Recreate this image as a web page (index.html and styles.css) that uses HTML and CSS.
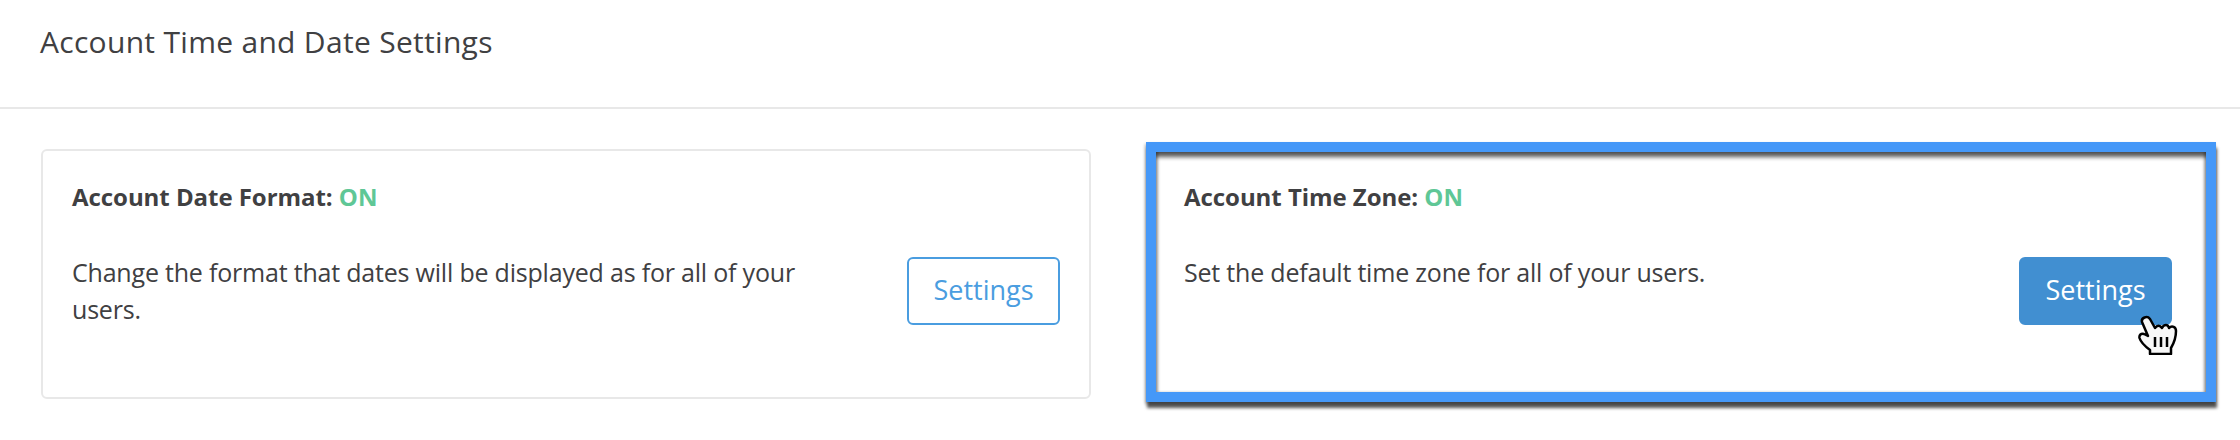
FILE: index.html
```html
<!DOCTYPE html>
<html lang="en">
<head>
  <meta charset="UTF-8">
  <title>Account Time and Date Settings</title>
  <link rel="stylesheet" href="styles.css">
</head>
<body>

  <h2 class="page-title">Account Time and Date Settings</h2>

  <div class="cards">
    <div class="card">
      <h3 class="card-title">Account Date Format: <span class="on">ON</span></h3>
      <div class="card-body">
        <p>Change the format that dates will be displayed as for all of your users.</p>
        <button class="btn">Settings</button>
      </div>
    </div>

    <div class="card card-marked">
      <h3 class="card-title">Account Time Zone: <span class="on">ON</span></h3>
      <div class="card-body">
        <p>Set the default time zone for all of your users.</p>
        <button class="btn btn-hover">Settings
          <svg class="cursor" width="40" height="40" viewBox="0 0 40 40">
            <path d="M4 7C3 3 9 0 12 4L17 13C19 10 22 10 24 13C26 9 30 9 31 13C34 10 38 12 38 16C38 24 36 28 33 33L33 39L12 39L12 35C8 32 3 28 1.500 23C1 20 3 18 6 19L10 21Z" fill="#f7f7f7" stroke="#000" stroke-width="2.500" stroke-linejoin="round"/>
            <path d="M17 22V32M23 22V32M29 22V32" fill="none" stroke="#000" stroke-width="2.500"/>
          </svg>
        </button>
      </div>
    </div>
  </div>

</body>
</html>
```

FILE: styles.css
```css
body {
  margin: 0;
  background-color: #fff;
  font-family: "Open Sans", Lato, sans-serif;
  color: #404042;
}

.page-title {
  margin: 0;
  padding-left: 40px;
  box-sizing: border-box;
  border-bottom: 2px solid #e8e8e8;
  height: 109px;
  font-size: 30px;
  font-weight: 400;
  line-height: 84px;
  letter-spacing: 0.3px;
}

.cards {
  display: flex;
  align-items: flex-start;
  padding: 33px 24px 38px 41px;
  gap: 55px;
}

.card {
  box-sizing: border-box;
  width: 1050px;
  height: 250px;
  margin-top: 7px;
  padding: 30px 29px;
  border: 2px solid #e8e8e8;
  border-radius: 6px;
}

.card-marked {
  width: 1070px;
  height: 260px;
  margin-top: 0;
  padding: 29px 34px 0 28px;
  border: 10px solid #4598f8;
  border-radius: 0;
  box-shadow: 1px 6px 3px rgba(0, 0, 0, 0.65), -1px 2px 3px rgba(0, 0, 0, 0.3), inset 0 6px 4px -1px rgba(0, 0, 0, 0.65), inset 3px 0 3px -1px rgba(0, 0, 0, 0.3), inset -3px 0 3px -1px rgba(0, 0, 0, 0.3);
}

.card-title {
  margin: 0;
  font-size: 24px;
  font-weight: 700;
  line-height: 32px;
  letter-spacing: -0.05px;
}

.on {
  color: #5fc796;
}

.card-body {
  display: flex;
  justify-content: space-between;
  align-items: flex-start;
  margin-top: 44px;
}

.card-body p {
  width: 770px;
  margin: -3px 0 0;
  font-size: 25px;
  line-height: 37px;
  letter-spacing: -0.2px;
}

.btn {
  position: relative;
  width: 153px;
  height: 68px;
  padding: 0 0 4px;
  background-color: #fff;
  border: 2px solid #4a9de0;
  border-radius: 6px;
  color: #4a9de0;
  font-family: inherit;
  font-size: 27px;
}

.btn-hover {
  background-color: #418fd1;
  border-color: #418fd1;
  color: #fff;
}

.cursor {
  position: absolute;
  left: 117px;
  top: 56px;
}
```
